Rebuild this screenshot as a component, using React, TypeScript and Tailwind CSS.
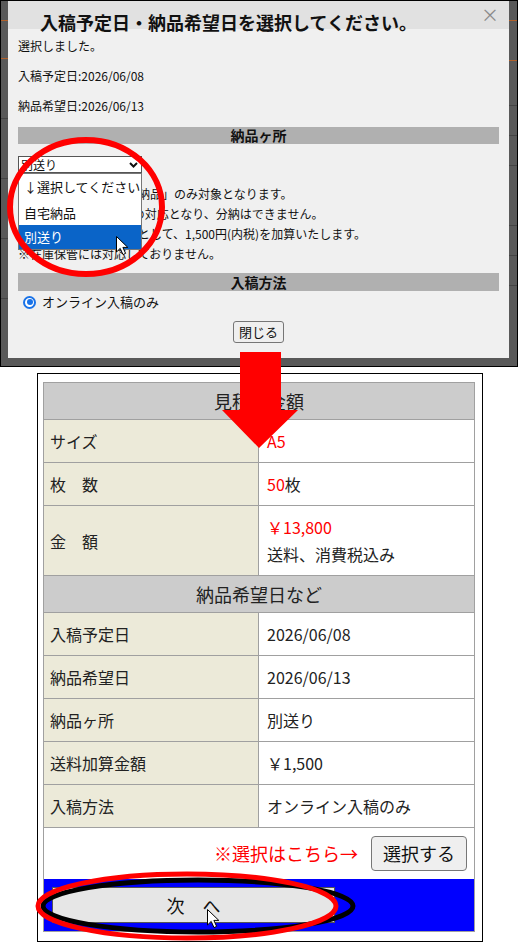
import React from 'react';

const jp = "font-['Noto_Sans_CJK_JP','Noto_Sans',sans-serif]";

type Row = { label: string; value: React.ReactNode; tall?: boolean };

const estimateRows: Row[] = [
  { label: 'サイズ', value: <span className="text-[#ff0000]">A5</span> },
  { label: '枚　数', value: <><span className="text-[#ff0000]">50</span>枚</> },
  {
    label: '金　額',
    tall: true,
    value: (
      <div className="leading-[27px]">
        <div className="text-[#ff0000]">￥13,800</div>
        <div>送料、消費税込み</div>
      </div>
    ),
  },
];

const deliveryRows: Row[] = [
  { label: '入稿予定日', value: '2026/06/08' },
  { label: '納品希望日', value: '2026/06/13' },
  { label: '納品ヶ所', value: '別送り' },
  { label: '送料加算金額', value: '￥1,500' },
  { label: '入稿方法', value: 'オンライン入稿のみ' },
];

function TableRow({ row }: { row: Row }) {
  return (
    <div className={`grid grid-cols-[215px_1fr] border-b border-[#a0a0a0] ${row.tall ? 'h-[70px]' : 'h-[43px]'}`}>
      <div className="flex items-center border-r border-[#a0a0a0] bg-[#ecead9] pl-[6px] text-[16px] text-[#222]">
        {row.label}
      </div>
      <div className="flex items-center bg-white pl-[8px] text-[16px] text-[#222]">{row.value}</div>
    </div>
  );
}

function SectionHead({ title }: { title: string }) {
  return (
    <div className="flex h-[37px] items-center justify-center border-b border-[#a0a0a0] bg-[#cccccc] text-[18px] text-[#222]">
      {title}
    </div>
  );
}

function Cursor({ x, y }: { x: number; y: number }) {
  return (
    <path
      transform={`translate(${x} ${y})`}
      d="M0.5 0.5 L0.5 16 L4.2 12.4 L7 18.6 L9.6 17.4 L6.9 11.4 L11.8 11.4 Z"
      fill="#fff"
      stroke="#000"
      strokeWidth={1}
      strokeLinejoin="round"
    />
  );
}

function Dialog() {
  return (
    <div className="h-[357px] w-[501px] bg-[#f0f0f0]">
      <div className="flex h-[28px] items-start justify-between bg-[#e1e1e1] pl-[32px] pr-[10px]">
        <div className="mt-[10px] whitespace-nowrap text-[18px] font-bold leading-[22px] text-[#111]">
          入稿予定日・納品希望日を選択してください。
        </div>
        <div className="mt-[2px] text-[18px] leading-[22px] text-[#8a8a8a]">×</div>
      </div>

      <div className="px-[10px] pt-[8px] text-[12px] text-[#111]">
        <p className="leading-[18px]">選択しました。</p>
        <p className="mt-[12px] leading-[18px]">入稿予定日:2026/06/08</p>
        <p className="mt-[12px] leading-[18px]">納品希望日:2026/06/13</p>

        <div className="mt-[12px] h-[17px] bg-[#b0b0b0] text-center text-[14px] font-bold leading-[17px]">
          納品ヶ所
        </div>

        <div className="relative mt-[12px]">
          <div className="flex h-[17px] w-[124px] items-center justify-between border border-[#555] bg-white pl-[2px] pr-[3px] text-[12px] leading-[15px]">
            <span>別送り</span>
            <svg width="9" height="6" viewBox="0 0 9 6">
              <path d="M1 1 L4.5 4.5 L8 1" fill="none" stroke="#111" strokeWidth="2" />
            </svg>
          </div>
          <div className="absolute left-0 top-[17px] z-10 w-[124px] border border-[#777] bg-white text-[13px]">
            <div className="flex h-[26px] items-center pl-[5px]">↓選択してください</div>
            <div className="flex h-[25px] items-center pl-[5px]">自宅納品</div>
            <div className="flex h-[24px] items-center bg-[#0a64c8] pl-[5px] text-white">別送り</div>
          </div>
        </div>

        <div className="mt-[11px] leading-[20px]">
          <p>※分割の場合は「自宅納品」のみ対象となります。</p>
          <p>※別送りは1ヶ所のみの対応となり、分納はできません。</p>
          <p>※別送りの場合は送料として、1,500円(内税)を加算いたします。</p>
          <p>※在庫保管には対応しておりません。</p>
        </div>

        <div className="mt-[9px] h-[18px] bg-[#b0b0b0] text-center text-[14px] font-bold leading-[18px]">
          入稿方法
        </div>

        <div className="mt-[3px] flex h-[16px] items-center">
          <div className="ml-[5px] flex h-[13px] w-[13px] items-center justify-center rounded-full border-2 border-[#1a73e8] bg-white">
            <div className="h-[6px] w-[6px] rounded-full bg-[#1a73e8]" />
          </div>
          <span className="ml-[6px] text-[13px]">オンライン入稿のみ</span>
        </div>

        <div className="mt-[11px] flex justify-center">
          <div className="flex h-[22px] w-[51px] items-center justify-center rounded-[3px] border border-[#767676] bg-[#efefef] text-[13px]">
            閉じる
          </div>
        </div>
      </div>
    </div>
  );
}

export default function App() {
  return (
    <div className={`relative h-[943px] w-[519px] overflow-hidden bg-white ${jp}`}>
      <div className="flex h-[367px] w-[518px] border border-black bg-[#595959]">
        <div className="flex w-[7px] flex-col">
          <div className="h-[20px] border-b border-[#b0602a]" />
          <div className="h-[38px] border-b border-[#b0602a]" />
          <div className="h-[60px] border-b border-[#444]" />
          <div className="h-[60px] border-b border-[#444]" />
          <div className="h-[60px] border-b border-[#444]" />
          <div className="h-[60px] border-b border-[#444]" />
        </div>
        <Dialog />
        <div className="flex w-[8px] flex-col">
          <div className="h-[20px] border-b border-[#b0602a]" />
          <div className="h-[40px] border-b border-[#b0602a]" />
          <div className="h-[45px] border-b border-[#444]" />
          <div className="h-[30px] border-b border-[#444]" />
          <div className="h-[30px] border-b border-[#444]" />
          <div className="h-[60px] border-b border-[#444]" />
          <div className="h-[30px] border-b border-[#444]" />
          <div className="h-[30px] border-b border-[#444]" />
        </div>
      </div>

      <div className="ml-[37px] mt-[6px] w-[446px] border border-black pb-[9px] pl-[5px] pr-[7px] pt-[8px]">
        <div className="border border-[#a0a0a0]">
          <SectionHead title="見積り金額" />
          {estimateRows.map((r) => (
            <TableRow key={r.label} row={r} />
          ))}
          <SectionHead title="納品希望日など" />
          {deliveryRows.map((r) => (
            <TableRow key={r.label} row={r} />
          ))}
          <div className="flex h-[51px] items-center justify-end gap-[13px] bg-white pr-[7px]">
            <span className="text-[18px] text-[#ff0000]">※選択はこちら→</span>
            <div className="flex h-[35px] w-[96px] items-center justify-center rounded-[4px] border border-[#777] bg-[#efefef] text-[18px] text-[#111]">
              選択する
            </div>
          </div>
          <div className="h-[52px] bg-[#0000ff] pl-[8px] pt-[8px]">
            <div className="flex h-[36px] w-[283px] items-center justify-center border border-[#555] bg-[#e6e6e6] text-[18px] text-[#111]">
              次　へ
            </div>
          </div>
        </div>
      </div>

      <svg className="pointer-events-none absolute left-0 top-0 z-20" width={519} height={943}>
        <ellipse cx={86} cy={207} rx={76} ry={67} fill="none" stroke="#ff0000" strokeWidth={6} />
        <Cursor x={116} y={236} />
        <polygon points="240,352 281,352 281,410 298,410 259,448 222,410 240,410" fill="#ff0000" />
        <ellipse cx={198} cy={906} rx={155} ry={26} fill="none" stroke="#000" strokeWidth={5} />
        <ellipse cx={187} cy={906} rx={149} ry={32} fill="none" stroke="#ff0000" strokeWidth={5} />
        <Cursor x={207} y={909} />
      </svg>
    </div>
  );
}
